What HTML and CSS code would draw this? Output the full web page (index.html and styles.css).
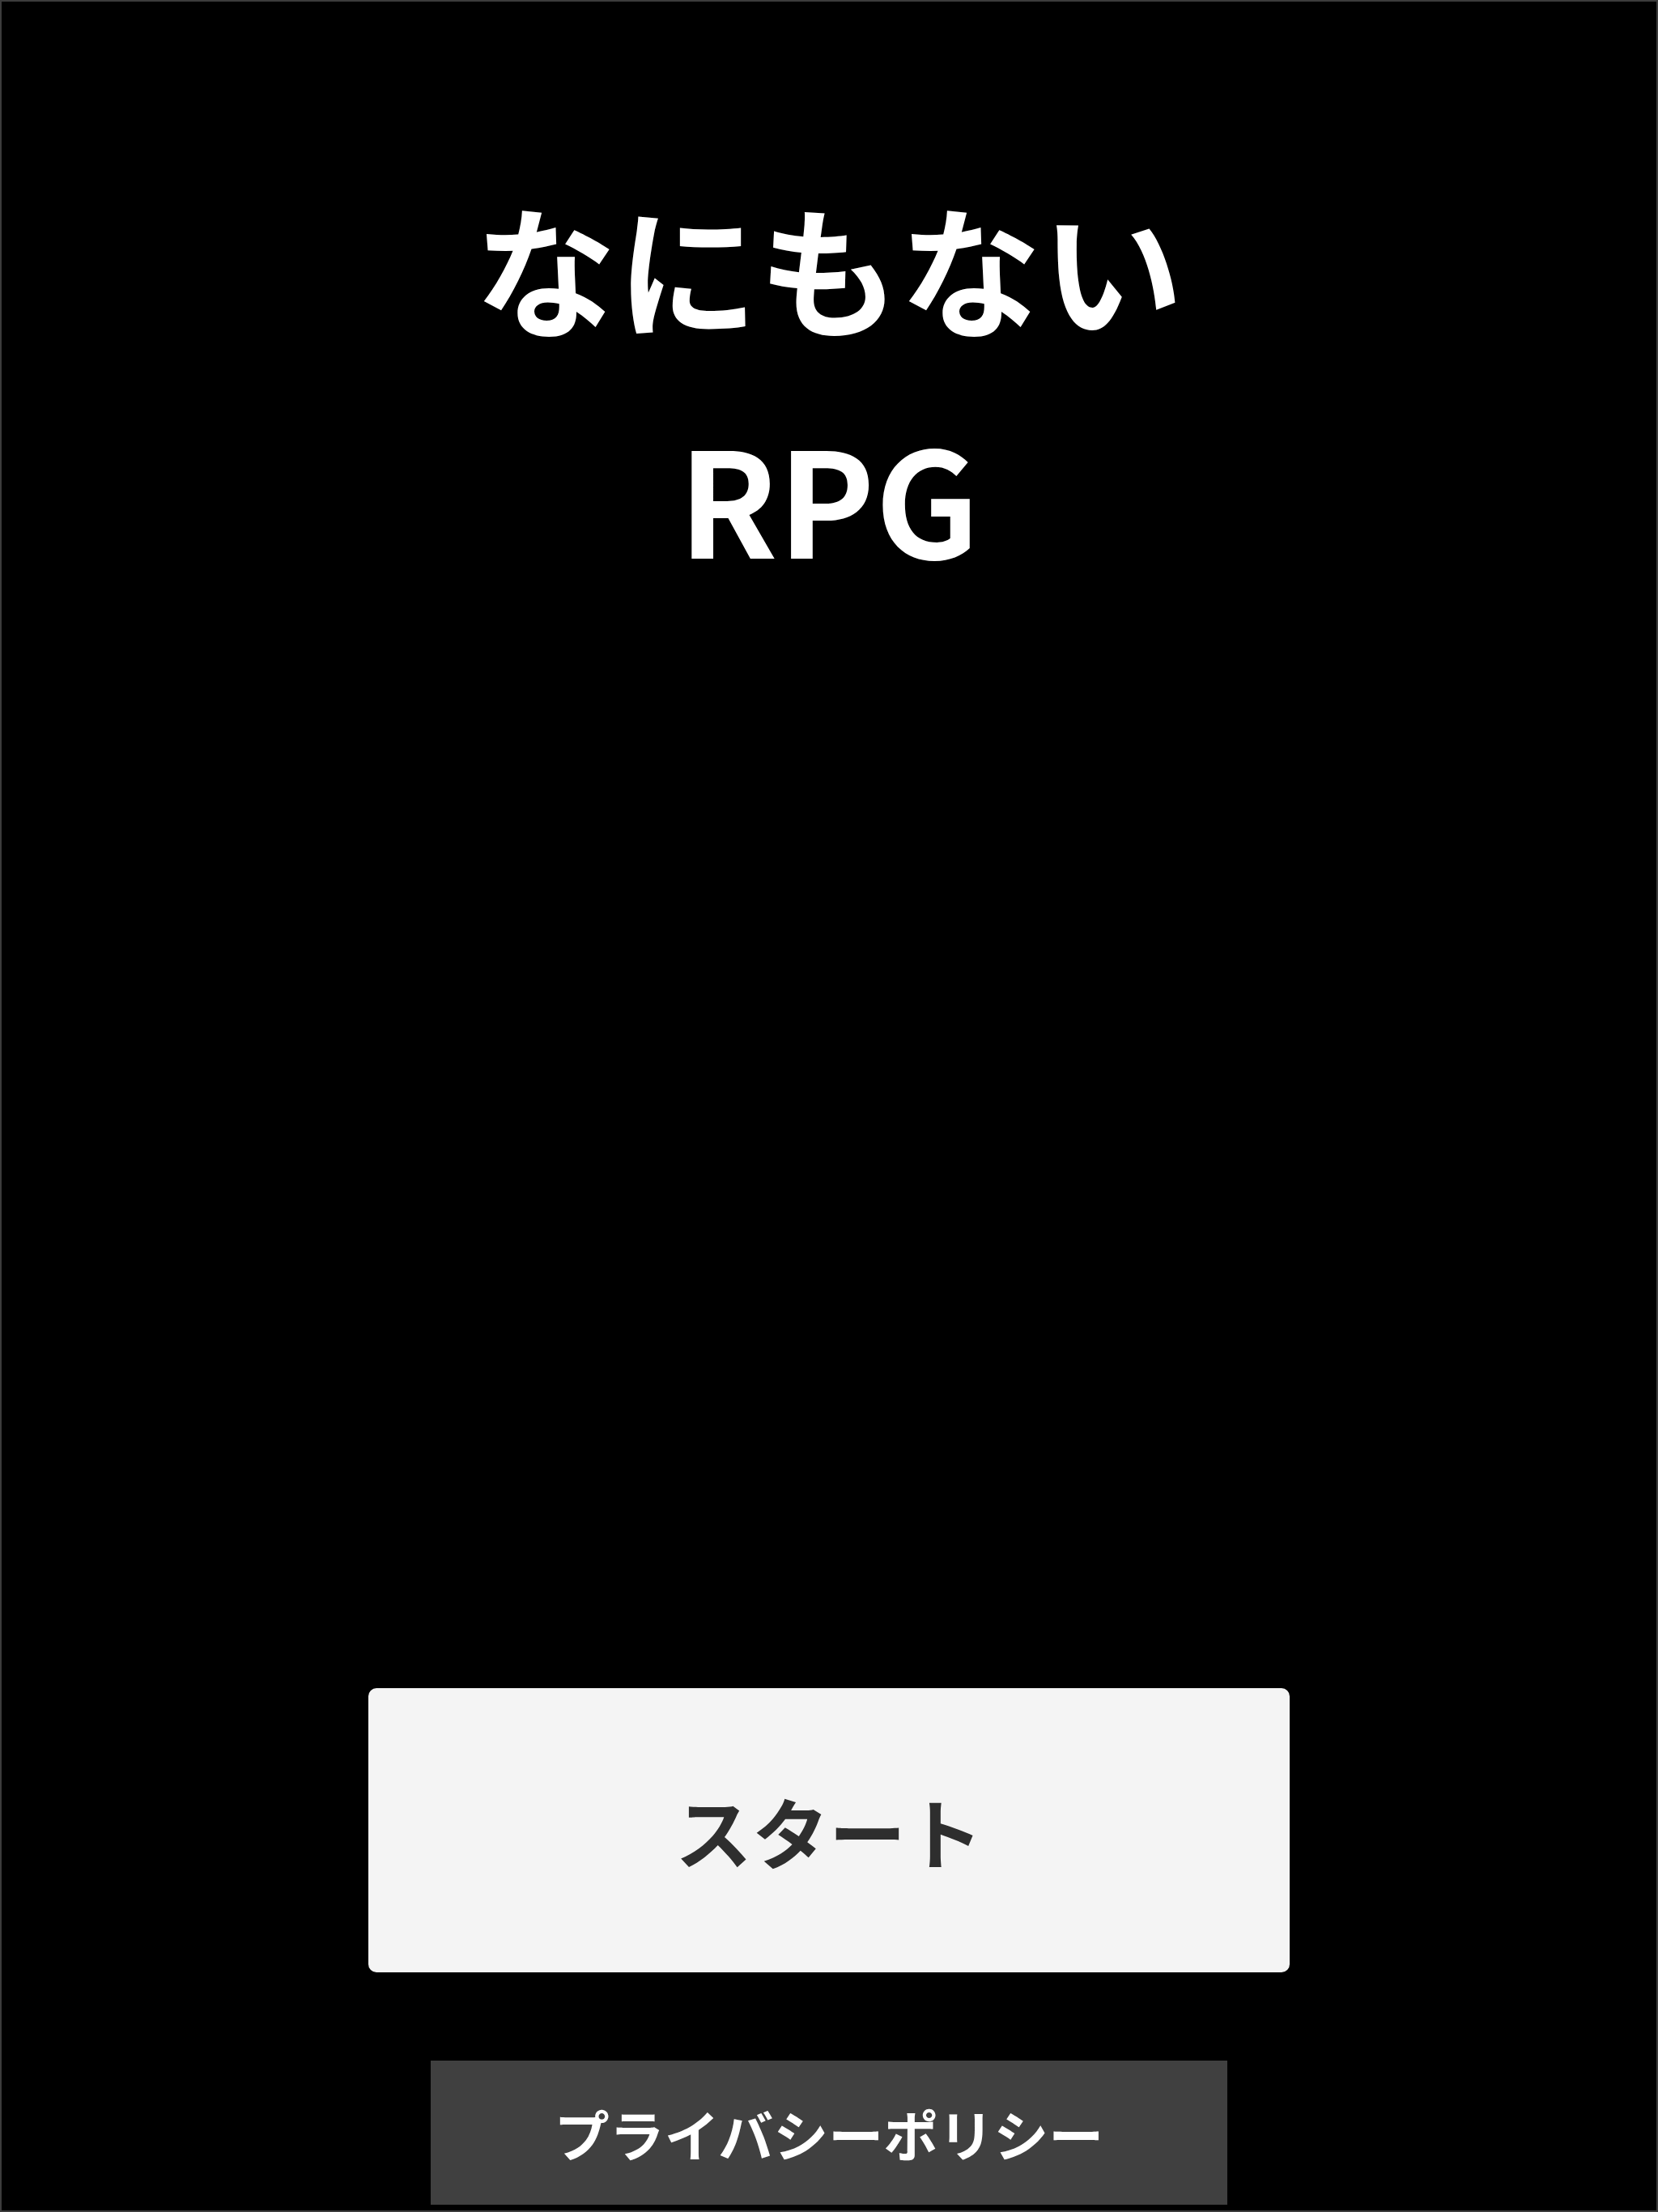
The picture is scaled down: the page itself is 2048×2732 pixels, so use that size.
FILE: index.html
```html
<!DOCTYPE html>
<html lang="ja">
<head>
<meta charset="utf-8">
<title>なにもないRPG</title>
<link rel="stylesheet" href="styles.css">
</head>
<body>
<div class="frame">
  <h1 class="title"><span class="line kana">なにもない</span><span class="line latin">RPG</span></h1>
  <div class="spacer"></div>
  <div class="actions">
    <button class="start">スタート</button>
    <button class="privacy">プライバシーポリシー</button>
  </div>
</div>
</body>
</html>
```
FILE: styles.css
```css
html, body {
  margin: 0;
  padding: 0;
  background: #000;
}
.frame {
  box-sizing: border-box;
  width: 2048px;
  height: 2732px;
  border: 2px solid #3c3c3c;
  background: #000;
  display: flex;
  flex-direction: column;
  align-items: center;
  font-family: "Noto Sans CJK JP", "Noto Sans", sans-serif;
}
.title {
  margin: 0;
  padding-top: 189px;
  color: #fff;
  font-weight: 700;
  line-height: 274px;
  text-align: center;
  display: flex;
  flex-direction: column;
  align-items: center;
}
.line {
  display: block;
  height: 274px;
}
.kana {
  font-size: 175px;
}
.latin {
  font-size: 180px;
  padding-top: 10px;
}
.spacer {
  flex: 1;
}
.actions {
  display: flex;
  flex-direction: column;
  align-items: center;
  gap: 109px;
  padding-bottom: 7px;
}
.start {
  width: 1138px;
  height: 351px;
  border: none;
  border-radius: 10px;
  background: #f4f4f4;
  color: #2e2e2e;
  font-family: "Noto Sans CJK JP", "Noto Sans", sans-serif;
  font-size: 95px;
  font-weight: 700;
  padding: 0;
}
.privacy {
  width: 984px;
  height: 178px;
  border: none;
  border-radius: 0;
  background: #404040;
  color: #fff;
  font-family: "Noto Sans CJK JP", "Noto Sans", sans-serif;
  font-size: 68px;
  font-weight: 700;
  padding: 0;
}
```
